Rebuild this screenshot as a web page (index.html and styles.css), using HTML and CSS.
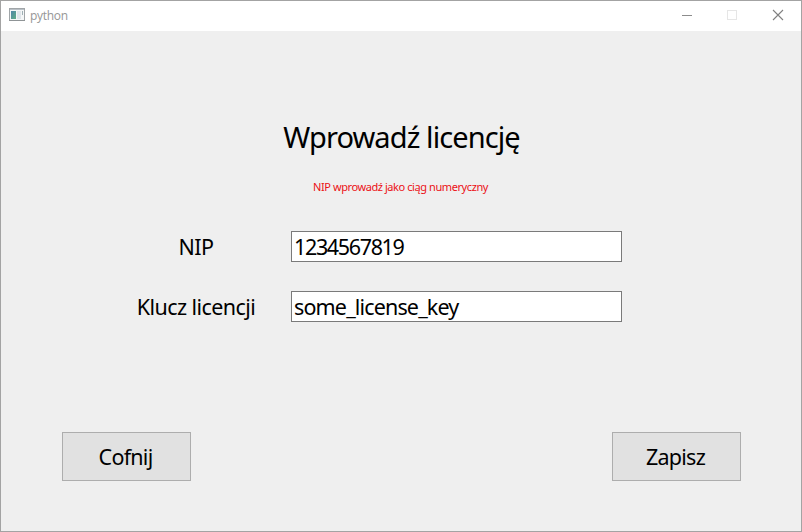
FILE: index.html
```
<!DOCTYPE html>
<html lang="pl">
<head>
<meta charset="utf-8">
<title>python</title>
<link rel="stylesheet" href="styles.css">
</head>
<body>
<div class="window">
  <header class="titlebar">
    <svg class="app-icon" width="16" height="14" viewBox="0 0 16 14">
      <defs><linearGradient id="g" x1="0" y1="0" x2="1" y2="1"><stop offset="0" stop-color="#4f86a8"/><stop offset="1" stop-color="#5fae86"/></linearGradient></defs>
      <rect x=".5" y=".5" width="15" height="12" fill="#f4f6f7" stroke="#a0a5a8"/>
      <path d="M1 1.5h14" stroke="#b9c0c6"/>
      <rect x="2" y="3" width="5" height="8" fill="url(#g)"/>
      <rect x="8" y="3" width="4" height="8" fill="#dfe5ea"/>
      <path d="M13.5 3v4" stroke="#9fb0b5"/>
      <path d="M0 12.5h16" stroke="#8f9496"/>
    </svg>
    <span class="caption">python</span>
    <div class="controls">
      <svg width="46" height="30" viewBox="0 0 46 30"><path d="M18 14.5h10" stroke="#8c8c8c"/></svg>
      <svg width="46" height="30" viewBox="0 0 46 30"><rect x="17.5" y="9.5" width="9" height="9" fill="none" stroke="#e6e6e6"/></svg>
      <svg width="46" height="30" viewBox="0 0 46 30"><path d="M17 9l10 10M27 9l-10 10" stroke="#808080" stroke-width="1.1"/></svg>
    </div>
  </header>
  <main class="content">
    <h1 class="heading">Wprowadź licencję</h1>
    <p class="error">NIP wprowadź jako ciąg numeryczny</p>
    <form class="form">
      <label class="label">NIP</label>
      <div class="field field-number">1234567819</div>
      <label class="label">Klucz licencji</label>
      <div class="field">some_license_key</div>
    </form>
    <footer class="actions">
      <button class="button" type="button">Cofnij</button>
      <button class="button" type="button">Zapisz</button>
    </footer>
  </main>
</div>
</body>
</html>
```
FILE: styles.css
```
* { box-sizing: border-box; }
body { margin: 0; font-family: "Noto Sans", sans-serif; color: #000; }
.window { width: 802px; height: 532px; border: 1px solid #a3a3a3; background: #efefef; display: flex; flex-direction: column; overflow: hidden; }
.titlebar { height: 30px; flex: none; background: #fff; display: flex; align-items: center; padding-left: 8px; }
.app-icon { display: block; margin-top: -2px; }
.caption { margin-left: 5px; font: 12px/16px "Open Sans", sans-serif; letter-spacing: -0.3px; color: #969696; }
.controls { margin-left: auto; margin-right: -1px; display: flex; height: 30px; }
.controls svg { display: block; }
.content { flex: 1; display: flex; flex-direction: column; padding: 85px 60px 50px 61px; }
.heading { margin: 0; height: 42px; line-height: 42px; font-size: 29px; font-weight: 400; text-align: center; white-space: nowrap; letter-spacing: -0.9px; }
.error { margin: 21px 0 0; padding-right: 2px; height: 16px; font-size: 11px; line-height: 16px; text-align: center; color: #ec1015; letter-spacing: -0.42px; }
.form { margin-top: 36px; padding-left: 40px; display: grid; grid-template-columns: 189px 331px; grid-template-rows: 31px 31px; row-gap: 29px; font-size: 21.5px; line-height: 32px; letter-spacing: -0.55px; white-space: nowrap; }
.label { text-align: center; padding-right: 1px; }
.field { background: #fff; border: 1px solid #7a7a7a; padding-left: 2px; line-height: 30px; letter-spacing: -0.85px; }
.field-number { letter-spacing: -1.35px; }
.actions { margin-top: auto; display: flex; justify-content: space-between; }
.button { width: 129px; height: 49px; padding: 0 2px 0 0; border: 1px solid #adadad; background: #e1e1e1; font: 21.5px/30px "Noto Sans", sans-serif; letter-spacing: -0.75px; color: #000; }
```
